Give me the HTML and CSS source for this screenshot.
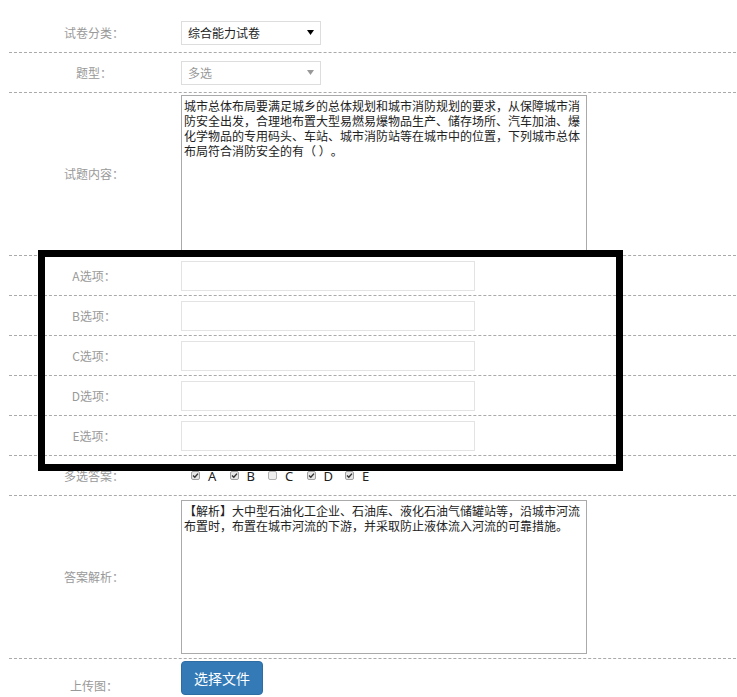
FILE: index.html
```html
<!DOCTYPE html>
<html lang="zh-CN">
<head>
<meta charset="utf-8">
<title>试题编辑</title>
<link rel="stylesheet" href="styles.css">
</head>
<body>
<div class="page">
  <div class="form">
    <div class="row">
      <div class="label">试卷分类：</div>
      <div class="field">
        <div class="select">
          <span>综合能力试卷</span>
          <svg class="arrow" width="7" height="5" viewBox="0 0 7 5"><path d="M0 0H7L3.5 5Z" fill="#000"/></svg>
        </div>
      </div>
    </div>
    <div class="row">
      <div class="label">题型：</div>
      <div class="field">
        <div class="select disabled">
          <span>多选</span>
          <svg class="arrow" width="7" height="5" viewBox="0 0 7 5"><path d="M0 0H7L3.5 5Z" fill="#999"/></svg>
        </div>
      </div>
    </div>
    <div class="row tall">
      <div class="label">试题内容：</div>
      <div class="field">
        <textarea class="area">城市总体布局要满足城乡的总体规划和城市消防规划的要求，从保障城市消防安全出发，合理地布置大型易燃易爆物品生产、储存场所、汽车加油、爆化学物品的专用码头、车站、城市消防站等在城市中的位置，下列城市总体布局符合消防安全的有（ ）。</textarea>
      </div>
    </div>
    <div class="row">
      <div class="label">A选项：</div>
      <div class="field"><input class="text" type="text"></div>
    </div>
    <div class="row">
      <div class="label">B选项：</div>
      <div class="field"><input class="text" type="text"></div>
    </div>
    <div class="row">
      <div class="label">C选项：</div>
      <div class="field"><input class="text" type="text"></div>
    </div>
    <div class="row">
      <div class="label">D选项：</div>
      <div class="field"><input class="text" type="text"></div>
    </div>
    <div class="row">
      <div class="label">E选项：</div>
      <div class="field"><input class="text" type="text"></div>
    </div>
    <div class="row">
      <div class="label">多选答案：</div>
      <div class="field checks">
        <label class="check"><svg class="box" width="9" height="9" viewBox="0 0 9 9"><rect x="0.5" y="0.5" width="8" height="8" rx="1.5" fill="#e6e6e6" stroke="#a0a0a0"/><path d="M2 4.6L3.8 6.3L7 2.6" fill="none" stroke="#333" stroke-width="1.4"/></svg><span>A</span></label>
        <label class="check"><svg class="box" width="9" height="9" viewBox="0 0 9 9"><rect x="0.5" y="0.5" width="8" height="8" rx="1.5" fill="#e6e6e6" stroke="#a0a0a0"/><path d="M2 4.6L3.8 6.3L7 2.6" fill="none" stroke="#333" stroke-width="1.4"/></svg><span>B</span></label>
        <label class="check"><svg class="box" width="9" height="9" viewBox="0 0 9 9"><rect x="0.5" y="0.5" width="8" height="8" rx="1.5" fill="#eeeeee" stroke="#b0b0b0"/></svg><span>C</span></label>
        <label class="check"><svg class="box" width="9" height="9" viewBox="0 0 9 9"><rect x="0.5" y="0.5" width="8" height="8" rx="1.5" fill="#e6e6e6" stroke="#a0a0a0"/><path d="M2 4.6L3.8 6.3L7 2.6" fill="none" stroke="#333" stroke-width="1.4"/></svg><span>D</span></label>
        <label class="check"><svg class="box" width="9" height="9" viewBox="0 0 9 9"><rect x="0.5" y="0.5" width="8" height="8" rx="1.5" fill="#e6e6e6" stroke="#a0a0a0"/><path d="M2 4.6L3.8 6.3L7 2.6" fill="none" stroke="#333" stroke-width="1.4"/></svg><span>E</span></label>
      </div>
    </div>
    <div class="row tall">
      <div class="label">答案解析：</div>
      <div class="field">
        <textarea class="area answer">【解析】大中型石油化工企业、石油库、液化石油气储罐站等，沿城市河流布置时，布置在城市河流的下游，并采取防止液体流入河流的可靠措施。</textarea>
      </div>
    </div>
    <div class="row upload">
      <div class="label">上传图：</div>
      <div class="field top">
        <button class="btn" type="button">选择文件</button>
      </div>
    </div>
  </div>
  <div class="highlight"></div>
</div>
</body>
</html>
```

FILE: styles.css
```css
* {
  box-sizing: border-box;
}

html, body {
  margin: 0;
  padding: 0;
  background: #fff;
}

body {
  font-family: "Noto Sans CJK SC", "Noto Sans", sans-serif;
  font-size: 12px;
  color: #333;
  overflow: hidden;
  text-spacing-trim: space-all;
}

.page {
  position: relative;
  width: 737px;
  height: 697px;
}

.form {
  padding: 13px 1px 0 9px;
}

.row {
  display: flex;
  align-items: center;
  height: 40px;
  border-bottom: 1px dashed #aaa;
}

.row.tall {
  height: 163px;
}

.row.upload {
  height: 53px;
  border-bottom: none;
}

.label {
  width: 170px;
  flex: none;
  text-align: center;
  color: #999;
  font-size: 12px;
  line-height: 16px;
}

.field {
  margin-left: 2px;
  display: flex;
  align-items: center;
}

.field.top {
  align-self: flex-start;
  margin-top: 2px;
}

.select {
  width: 140px;
  height: 24px;
  border: 1px solid #ddd;
  background: #fff;
  display: flex;
  align-items: center;
  justify-content: space-between;
  padding: 0 6px 0 6px;
  color: #222;
  font-size: 12px;
}

.select.disabled {
  color: #999;
}

.arrow {
  display: block;
}

.area {
  display: block;
  width: 406px;
  height: 158px;
  border: 1px solid #aaa;
  padding: 2px;
  margin: 0;
  font-family: "Noto Sans CJK SC", "Noto Sans", sans-serif;
  font-size: 12px;
  line-height: 15px;
  color: #222;
  resize: none;
  overflow: hidden;
  outline: none;
  text-spacing-trim: space-all;
}

.area.answer {
  height: 154px;
}

.text {
  display: block;
  width: 294px;
  height: 30px;
  border: 1px solid #e3e3e3;
  margin: 0;
  padding: 0 6px;
  background: #fff;
  outline: none;
}

.checks {
  padding-left: 10px;
  height: 16px;
}

.check {
  display: flex;
  align-items: center;
  width: 38.5px;
  flex: none;
  font-family: "Noto Sans", sans-serif;
  font-size: 13px;
  color: #222;
}

.check .box {
  display: block;
  margin-right: 8px;
}

.btn {
  display: block;
  width: 82px;
  height: 34px;
  border: 1px solid #2e6da4;
  border-radius: 4px;
  background: #337ab7;
  color: #fff;
  font-family: "Noto Sans CJK SC", "Noto Sans", sans-serif;
  font-size: 14px;
  padding: 0 12px;
  cursor: pointer;
}

.highlight {
  position: absolute;
  left: 38px;
  top: 250px;
  width: 585px;
  height: 221px;
  border: 7px solid #000;
  pointer-events: none;
}
```
